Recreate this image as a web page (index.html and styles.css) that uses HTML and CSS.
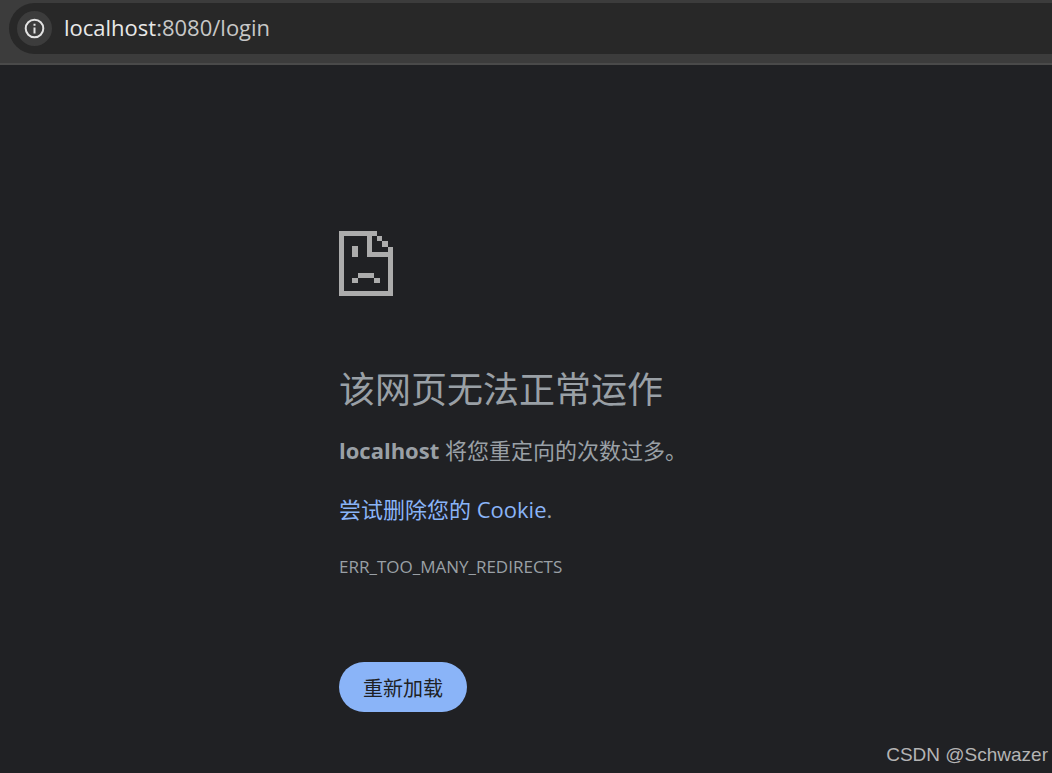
FILE: index.html
```html
<!DOCTYPE html>
<html lang="zh-CN">
<head>
  <meta charset="UTF-8" />
  <meta name="viewport" content="width=device-width, initial-scale=1.0"/>
  <title>localhost</title>
  <link rel="stylesheet" href="styles.css">
</head>
<body>

  <header class="toolbar">
    <div class="address-bar">
      <button class="site-info" aria-label="查看网站信息">
        <svg width="21" height="21" viewBox="0 0 21 21" fill="none" stroke="#e3e3e3" stroke-width="2">
          <circle cx="10.5" cy="10.5" r="8.8"/>
          <path d="M10.5 9.5v6M10.5 5.7v2"/>
        </svg>
      </button>
      <div class="url"><span class="host">localhost</span>:8080/login</div>
    </div>
  </header>

  <main class="error-page">
    <svg class="icon" width="54" height="65" viewBox="0 0 54 65" fill="#acacac" shape-rendering="crispEdges">
      <path d="M0 0H38V5H33V21H49V16H54V65H0ZM5 5V60H49V26H28V5Z" fill-rule="evenodd"/>
      <path d="M38 5h5v5h-5zM43 10h6v6h-6zM13 15h6v11h-6zM19 42h16v5h-16zM13 47h6v5h-6zM35 47h6v5h-6z"/>
    </svg>
    <h1>该网页无法正常运作</h1>
    <p><strong>localhost</strong> 将您重定向的次数过多。</p>
    <p><a href="#">尝试删除您的 Cookie</a>.</p>
    <div class="error-code">ERR_TOO_MANY_REDIRECTS</div>
    <button class="reload">重新加载</button>
  </main>

  <footer class="watermark">CSDN @Schwazer</footer>

</body>
</html>
```
FILE: styles.css
```css
* {
  box-sizing: border-box;
}
body {
  margin: 0;
  min-height: 100vh;
  display: flex;
  flex-direction: column;
  background: #202124;
  color: #9aa0a6;
  font-family: "Open Sans", "Noto Sans CJK SC", sans-serif;
  font-size: 22px;
}
.toolbar {
  padding: 3px 0 9px 9px;
  background: #3c3c3c;
  border-bottom: 2px solid #4a4a4a;
}
.address-bar {
  display: flex;
  align-items: center;
  gap: 12px;
  height: 51px;
  padding-left: 8px;
  background: #282828;
  border-radius: 26px 0 0 26px;
}
.site-info {
  display: flex;
  align-items: center;
  justify-content: center;
  width: 35px;
  height: 35px;
  padding: 0;
  border: none;
  border-radius: 50%;
  background: #3c3c3c;
}
.url {
  padding-bottom: 3px;
  color: #c7c7c7;
}
.host {
  color: #e8e8e8;
}
.error-page {
  flex: 1;
  width: 100%;
  max-width: 714px;
  margin: 0 auto;
  padding: 166px 0 0 170px;
}
.icon {
  display: block;
}
h1 {
  margin: 67px 0 16px;
  font-size: 36px;
  font-weight: normal;
  line-height: 54px;
}
p {
  margin: 0 0 24px;
  line-height: 35px;
}
a {
  color: #8ab4f8;
  text-decoration: none;
}
.error-code {
  font-size: 17px;
  line-height: 32px;
}
.reload {
  display: block;
  margin-top: 79px;
  padding: 0 24px;
  height: 50px;
  border: none;
  border-radius: 25px;
  background: #8ab4f8;
  color: #202124;
  font-family: inherit;
  font-size: 20px;
}
.watermark {
  padding: 0 4px 6px 0;
  color: #b4b4b4;
  font-family: "Liberation Sans", Arial, sans-serif;
  font-size: 19px;
  line-height: 24px;
  text-align: right;
}
```
